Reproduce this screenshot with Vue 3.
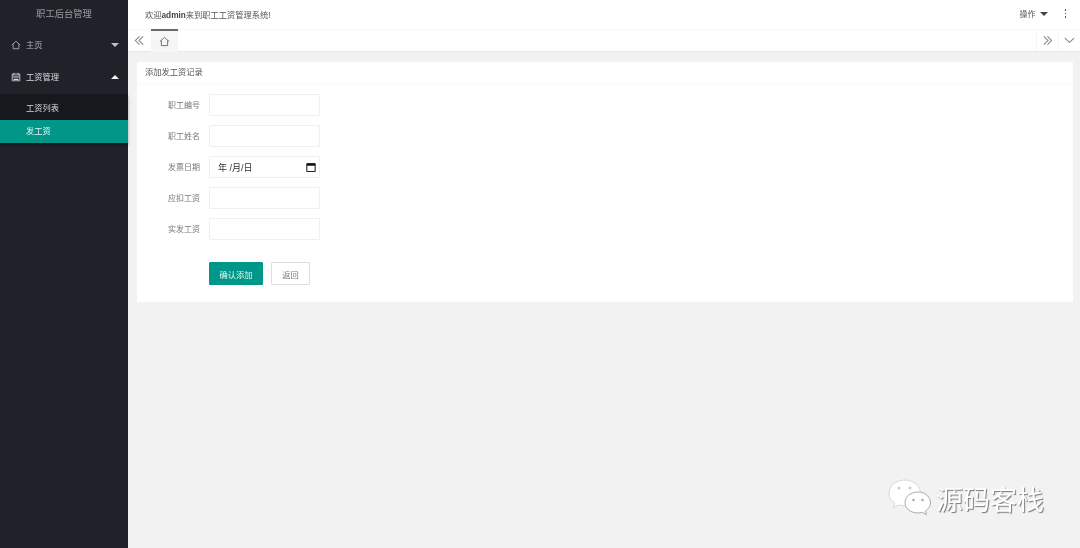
<script setup>
const menu = [
  { label: '工资列表', active: false },
  { label: '发工资', active: true },
]
const fields = [
  { label: '职工编号' },
  { label: '职工姓名' },
  { label: '发票日期', date: true },
  { label: '应扣工资' },
  { label: '实发工资' },
]
</script>

<template>
  <div class="page">
    <aside class="side">
      <div class="logo">职工后台管理</div>
      <div class="nav-item">
        <svg class="ico" viewBox="0 0 12 12"><path d="M1 6 6 1.500 11 6M2.600 5v5.500h6.800V5" fill="none" stroke="currentColor" stroke-width="1"/></svg>
        <span>主页</span>
        <i class="caret down"></i>
      </div>
      <div class="nav-item open">
        <svg class="ico" viewBox="0 0 12 12"><path d="M1.500 2.500h9v8h-9zM1.500 5h9M3.500 1v2.500M8.500 1v2.500" fill="none" stroke="currentColor" stroke-width="1"/><path d="M3 6.500h6v1H3zM3 8.500h6v1H3z" fill="currentColor"/></svg>
        <span>工资管理</span>
        <i class="caret up"></i>
      </div>
      <div class="sub">
        <div v-for="m in menu" :key="m.label" class="sub-item" :class="{ active: m.active }">{{ m.label }}</div>
      </div>
    </aside>

    <main class="main">
      <header class="top">
        <div class="welcome">欢迎<b>admin</b>来到职工工资管理系统!</div>
        <div class="ops">
          <span>操作</span>
          <i class="caret dark"></i>
          <span class="dots"><i></i><i></i><i></i></span>
        </div>
      </header>

      <div class="tabs">
        <div class="tab-btn left">
          <svg viewBox="0 0 12 12"><path d="M6 1.500 1.500 6 6 10.500M10 1.500 5.500 6 10 10.500" fill="none" stroke="currentColor" stroke-width="1.100"/></svg>
        </div>
        <div class="tab">
          <svg viewBox="0 0 12 12"><path d="M1 6 6 1.500 11 6M2.600 5v5.500h6.800V5" fill="none" stroke="currentColor"/></svg>
        </div>
        <div class="spacer"></div>
        <div class="tab-btn right">
          <svg viewBox="0 0 12 12"><path d="M2 1.500 6.500 6 2 10.500M6 1.500 10.500 6 6 10.500" fill="none" stroke="currentColor" stroke-width="1.100"/></svg>
        </div>
        <div class="tab-btn right">
          <svg viewBox="0 0 12 12"><path d="M1 3.500 6 8l5-4.500" fill="none" stroke="currentColor" stroke-width="1.100"/></svg>
        </div>
      </div>

      <div class="content">
        <section class="card">
          <div class="card-head">添加发工资记录</div>
          <form class="form" @submit.prevent>
            <div v-for="f in fields" :key="f.label" class="row">
              <label>{{ f.label }}</label>
              <div v-if="f.date" class="input date">
                <span>年 /月/日</span>
                <svg viewBox="0 0 12 12"><path d="M1 2h10v9.500H1z" fill="none" stroke="#111" stroke-width="1.200"/><path d="M1 2h10v2.500H1z" fill="#111"/></svg>
              </div>
              <input v-else class="input" type="text" />
            </div>
            <div class="actions">
              <button class="btn primary" type="button">确认添加</button>
              <button class="btn" type="button">返回</button>
            </div>
          </form>
        </section>
      </div>
    </main>

    <div class="mark">
      <svg viewBox="0 0 46 40" width="46" height="40">
        <path d="M18 2C9 2 2 8 2 15.500c0 4 2.200 7.500 5.800 9.900l-1.300 4.200 5-2.700c2 .6 4.200.9 6.500.9 8.800 0 15.500-5.800 15.500-12.300S27 2 18 2z" fill="#fff" stroke="#d8d8d8"/>
        <path d="M31 14c-7.400 0-13 4.700-13 10.500S23.600 35 31 35c1.500 0 3-.3 4.300-.7l4.200 2.400-1.100-3.700c3-2 5.100-4.800 5.100-8 0-5.800-5.100-11-12.500-11z" fill="#fff" stroke="#aaa"/>
        <circle cx="12" cy="10" r="1.500" fill="#ccc"/><circle cx="23" cy="10" r="1.500" fill="#ccc"/>
        <circle cx="26.500" cy="22" r="1.300" fill="#aaa"/><circle cx="35.500" cy="22" r="1.300" fill="#aaa"/>
      </svg>
      <span>源码客栈</span>
    </div>
  </div>
</template>

<style>
html, body { margin: 0; padding: 0; background: #f2f2f2; }
</style>

<style scoped>
.page {
  position: relative;
  display: flex;
  width: 1080px;
  height: 548px;
  overflow: hidden;
  background: #f2f2f2;
  font-family: "Liberation Sans", "Noto Sans CJK SC", sans-serif;
  font-size: 8.250px;
  color: #666;
  filter: blur(0.35px);
}
.side {
  flex: 0 0 128px;
  background: #20222a;
  color: #b5b6b8;
}
.logo {
  height: 29px;
  line-height: 29px;
  text-align: center;
  font-size: 9.300px;
  color: #9a9c9f;
}
.nav-item {
  display: flex;
  align-items: center;
  height: 32px;
  padding-left: 11px;
  padding-right: 9px;
  gap: 5px;
}
.nav-item.open { color: #d8d9da; }
.nav-item span { flex: 1; margin-bottom: 2px; }
.ico { width: 10px; height: 10px; }
.caret {
  width: 0;
  height: 0;
  border-left: 4px solid transparent;
  border-right: 4px solid transparent;
}
.caret.down { border-top: 4px solid #c2c2c2; }
.caret.up { border-bottom: 4px solid #f0f0f0; }
.caret.dark { border-top: 4px solid #444; margin-top: 1px; }
.sub {
  background: #16181d;
  padding-top: 2px;
  margin-top: 1px;
  height: 47px;
  box-shadow: 0 2px 3px rgba(0, 0, 0, 0.3);
}
.sub-item {
  height: 24px;
  line-height: 26px;
  padding-left: 26px;
  color: #d5d6d7;
}
.sub-item.active {
  height: 23px;
  line-height: 23px;
  background: #009688;
  color: #e8f5f3;
}
.main {
  flex: 1;
  display: flex;
  flex-direction: column;
  min-width: 0;
}
.top {
  display: flex;
  justify-content: space-between;
  align-items: center;
  height: 29px;
  padding: 0 14px 0 17px;
  background: #fff;
  color: #555;
}
.welcome { margin-bottom: 2px; }
.top b { color: #444; }
.ops { display: flex; align-items: center; gap: 4px; font-size: 8px; margin-bottom: 2px; }
.dots {
  display: flex;
  flex-direction: column;
  gap: 2px;
  margin-left: 13px;
}
.dots i { width: 1.500px; height: 1.500px; background: #555; }
.tabs {
  display: flex;
  height: 23px;
  background: #fff;
  border-top: 1px solid #f8f8f8;
  box-sizing: border-box;
  border-bottom: 1px solid #e8e8e8;
  color: #808080;
}
.tab-btn {
  display: flex;
  align-items: center;
  justify-content: center;
  width: 23px;
  height: 100%;
  box-sizing: border-box;
}
.tab-btn svg { width: 11px; height: 11px; }
.tab-btn.right { border-left: 1px solid #f6f6f6; width: 22px; }
.tab {
  display: flex;
  align-items: center;
  justify-content: center;
  width: 27px;
  height: 23px;
  margin-top: -1px;
  box-sizing: border-box;
  background: #f6f6f6;
  border-top: 2px solid #6b6b6b;
  color: #666;
}
.tab svg { width: 11px; height: 11px; }
.spacer { flex: 1; }
.content { padding: 10px 7px 0 9px; }
.card {
  height: 240px;
  background: #fff;
  border-radius: 1px;
}
.card-head {
  height: 21px;
  line-height: 22px;
  padding-left: 8px;
  border-bottom: 1px solid #fafafa;
  color: #555;
}
.form { padding-top: 10px; }
.row {
  display: flex;
  align-items: center;
  height: 22px;
  margin-bottom: 9px;
}
.row label {
  width: 63px;
  text-align: right;
  margin-right: 9px;
  margin-bottom: 2px;
  color: #777;
  font-size: 8px;
}
.input {
  width: 111px;
  height: 22px;
  box-sizing: border-box;
  margin: 0;
  padding: 0 8px;
  border: 1px solid #f0f0f0;
  border-radius: 1px;
  background: #fff;
  outline: none;
}
.date {
  display: flex;
  align-items: center;
  justify-content: space-between;
  padding-right: 3px;
  font-size: 9px;
  color: #333;
}
.date svg { width: 10px; height: 10px; }
.actions {
  display: flex;
  gap: 8px;
  margin-top: 22px;
  padding-left: 72px;
}
.btn {
  height: 23px;
  width: 39px;
  padding: 0;
  font: inherit;
  color: #777;
  background: #fff;
  border: 1px solid #dedede;
  border-radius: 1px;
}
.btn.primary {
  width: 54px;
  background: #009688;
  border-color: #009688;
  color: #e8f5f3;
}
.mark {
  position: absolute;
  left: 887px;
  top: 478px;
  display: flex;
  align-items: flex-start;
  gap: 3px;
}
.mark span {
  margin-top: 3px;
  font-size: 27px;
  line-height: 40px;
  color: #fff;
  text-shadow: 1px 1px 1px #777;
}
</style>
